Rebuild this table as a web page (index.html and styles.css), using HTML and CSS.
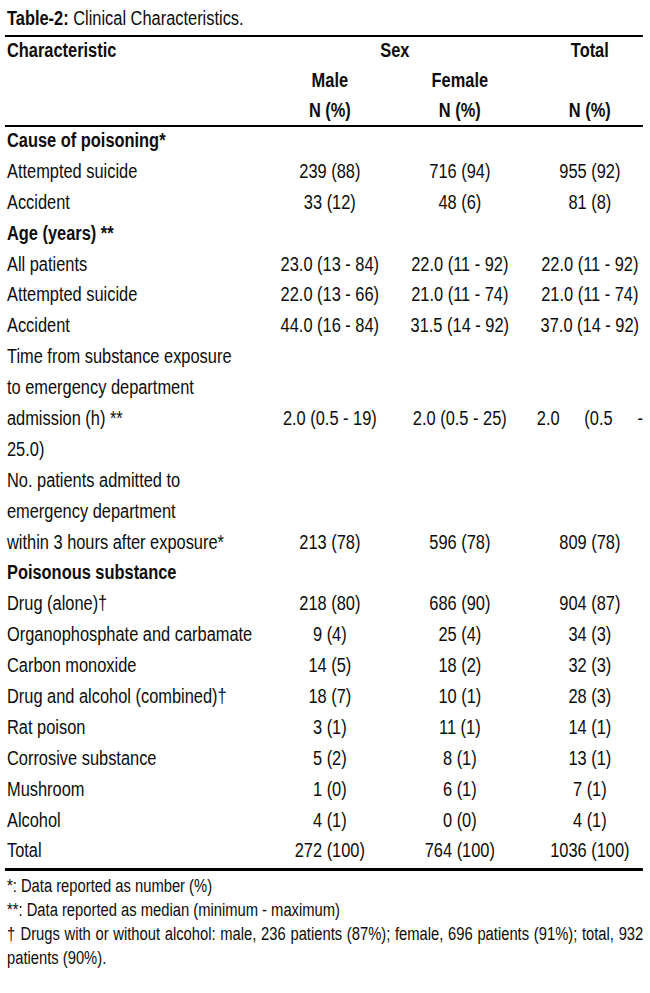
FILE: index.html
```html
<!DOCTYPE html>
<html lang="en">
<head>
<meta charset="utf-8">
<title>Table-2: Clinical Characteristics</title>
<link rel="stylesheet" href="styles.css">
</head>
<body>
<div class="frame">
<div class="page">
  <p class="caption"><b>Table-2:</b> Clinical Characteristics.</p>
  <div class="table">
    <div class="thead">
      <div class="row">
        <div class="cell lab b">Characteristic</div>
        <div class="cell num b span2">Sex</div>
        <div class="cell num tot b">Total</div>
      </div>
      <div class="row">
        <div class="cell lab"></div>
        <div class="cell num b">Male</div>
        <div class="cell num b">Female</div>
        <div class="cell num tot"></div>
      </div>
      <div class="row last">
        <div class="cell lab"></div>
        <div class="cell num b">N (%)</div>
        <div class="cell num b">N (%)</div>
        <div class="cell num tot b">N (%)</div>
      </div>
    </div>
    <div class="tbody">
      <div class="row"><div class="cell lab b">Cause of poisoning*</div></div>
      <div class="row"><div class="cell lab">Attempted suicide</div><div class="cell num">239 (88)</div><div class="cell num">716 (94)</div><div class="cell num tot">955 (92)</div></div>
      <div class="row"><div class="cell lab">Accident</div><div class="cell num">33 (12)</div><div class="cell num">48 (6)</div><div class="cell num tot">81 (8)</div></div>
      <div class="row"><div class="cell lab b">Age (years) **</div></div>
      <div class="row"><div class="cell lab">All patients</div><div class="cell num">23.0 (13 - 84)</div><div class="cell num">22.0 (11 - 92)</div><div class="cell num tot">22.0 (11 - 92)</div></div>
      <div class="row"><div class="cell lab">Attempted suicide</div><div class="cell num">22.0 (13 - 66)</div><div class="cell num">21.0 (11 - 74)</div><div class="cell num tot">21.0 (11 - 74)</div></div>
      <div class="row"><div class="cell lab">Accident</div><div class="cell num">44.0 (16 - 84)</div><div class="cell num">31.5 (14 - 92)</div><div class="cell num tot">37.0 (14 - 92)</div></div>
      <div class="row">
        <div class="lab multi"><span class="ln">Time from substance exposure</span><span class="ln">to emergency department</span><span class="ln">admission (h) **</span></div>
        <div class="cell num">2.0 (0.5 - 19)</div><div class="cell num">2.0 (0.5 - 25)</div><div class="cell num tot just">2.0 (0.5 -</div>
      </div>
      <div class="row"><div class="cell lab">25.0)</div></div>
      <div class="row">
        <div class="lab multi"><span class="ln">No. patients admitted to</span><span class="ln">emergency department</span><span class="ln">within 3 hours after exposure*</span></div>
        <div class="cell num">213 (78)</div><div class="cell num">596 (78)</div><div class="cell num tot">809 (78)</div>
      </div>
      <div class="row"><div class="cell lab b">Poisonous substance</div></div>
      <div class="row"><div class="cell lab">Drug (alone)†</div><div class="cell num">218 (80)</div><div class="cell num">686 (90)</div><div class="cell num tot">904 (87)</div></div>
      <div class="row"><div class="cell lab">Organophosphate and carbamate</div><div class="cell num">9 (4)</div><div class="cell num">25 (4)</div><div class="cell num tot">34 (3)</div></div>
      <div class="row"><div class="cell lab">Carbon monoxide</div><div class="cell num">14 (5)</div><div class="cell num">18 (2)</div><div class="cell num tot">32 (3)</div></div>
      <div class="row"><div class="cell lab">Drug and alcohol (combined)†</div><div class="cell num">18 (7)</div><div class="cell num">10 (1)</div><div class="cell num tot">28 (3)</div></div>
      <div class="row"><div class="cell lab">Rat poison</div><div class="cell num">3 (1)</div><div class="cell num">11 (1)</div><div class="cell num tot">14 (1)</div></div>
      <div class="row"><div class="cell lab">Corrosive substance</div><div class="cell num">5 (2)</div><div class="cell num">8 (1)</div><div class="cell num tot">13 (1)</div></div>
      <div class="row"><div class="cell lab">Mushroom</div><div class="cell num">1 (0)</div><div class="cell num">6 (1)</div><div class="cell num tot">7 (1)</div></div>
      <div class="row"><div class="cell lab">Alcohol</div><div class="cell num">4 (1)</div><div class="cell num">0 (0)</div><div class="cell num tot">4 (1)</div></div>
      <div class="row"><div class="cell lab">Total</div><div class="cell num">272 (100)</div><div class="cell num">764 (100)</div><div class="cell num tot">1036 (100)</div></div>
    </div>
  </div>
  <div class="notes">
    <p>*: Data reported as number (%)</p>
    <p>**: Data reported as median (minimum - maximum)</p>
    <p class="jn">† Drugs with or without alcohol: male, 236 patients (87%); female, 696 patients (91%); total, 932 patients (90%).</p>
  </div>
</div>
</div>
</body>
</html>
```
FILE: styles.css
```css
/* The reference uses a condensed face; the page is laid out in a
   wider box and narrowed once with scaleX(0.82) to give the
   Arial-Narrow proportions from Liberation Sans. */
html, body {
  margin: 0;
  padding: 0;
  background: #ffffff;
}
body {
  color: #0d0d0d;
  font-family: "Liberation Sans", Arial, sans-serif;
  font-size: 20px;
}
.frame {
  width: 650px;
  overflow: hidden;
}
.page {
  width: 793px;
  transform: scaleX(0.82);
  transform-origin: 0 0;
}
.caption {
  margin: 0;
  padding: 6px 0 0 8.5px;
  line-height: 24px;
  height: 24px;
}
.caption b {
  font-weight: 700;
}
.table {
  margin: 5px 0 0 6px;
  width: 778px;
  border-top: 2px solid #000;
  border-bottom: 3px solid #000;
}
.thead {
  border-bottom: 2px solid #000;
}
.row {
  display: grid;
  grid-template-columns: 317px 158.5px 158.5px 144px;
  align-items: end;
}
.cell {
  line-height: 26px;
  white-space: nowrap;
}
.thead .row .cell {
  padding-bottom: 4px;
}
.thead .row.last .cell {
  padding-bottom: 2px;
}
.tbody .row .cell,
.tbody .ln {
  padding-bottom: 4.9px;
}
.lab {
  padding-left: 2.5px;
  text-align: left;
}
.multi {
  white-space: nowrap;
}
.ln {
  display: block;
  line-height: 26px;
}
.num {
  text-align: center;
}
.span2 {
  grid-column: 2 / span 2;
}
.tot {
  grid-column: 4;
  padding-left: 14.6px;
}
.just {
  text-align: justify;
  text-align-last: justify;
}
.b {
  font-weight: 700;
}
.notes {
  margin: 4px 8.5px 0 8.5px;
  font-size: 18px;
}
.notes p {
  margin: 0;
  line-height: 23.8px;
}
.notes .jn {
  text-align: justify;
}
```
